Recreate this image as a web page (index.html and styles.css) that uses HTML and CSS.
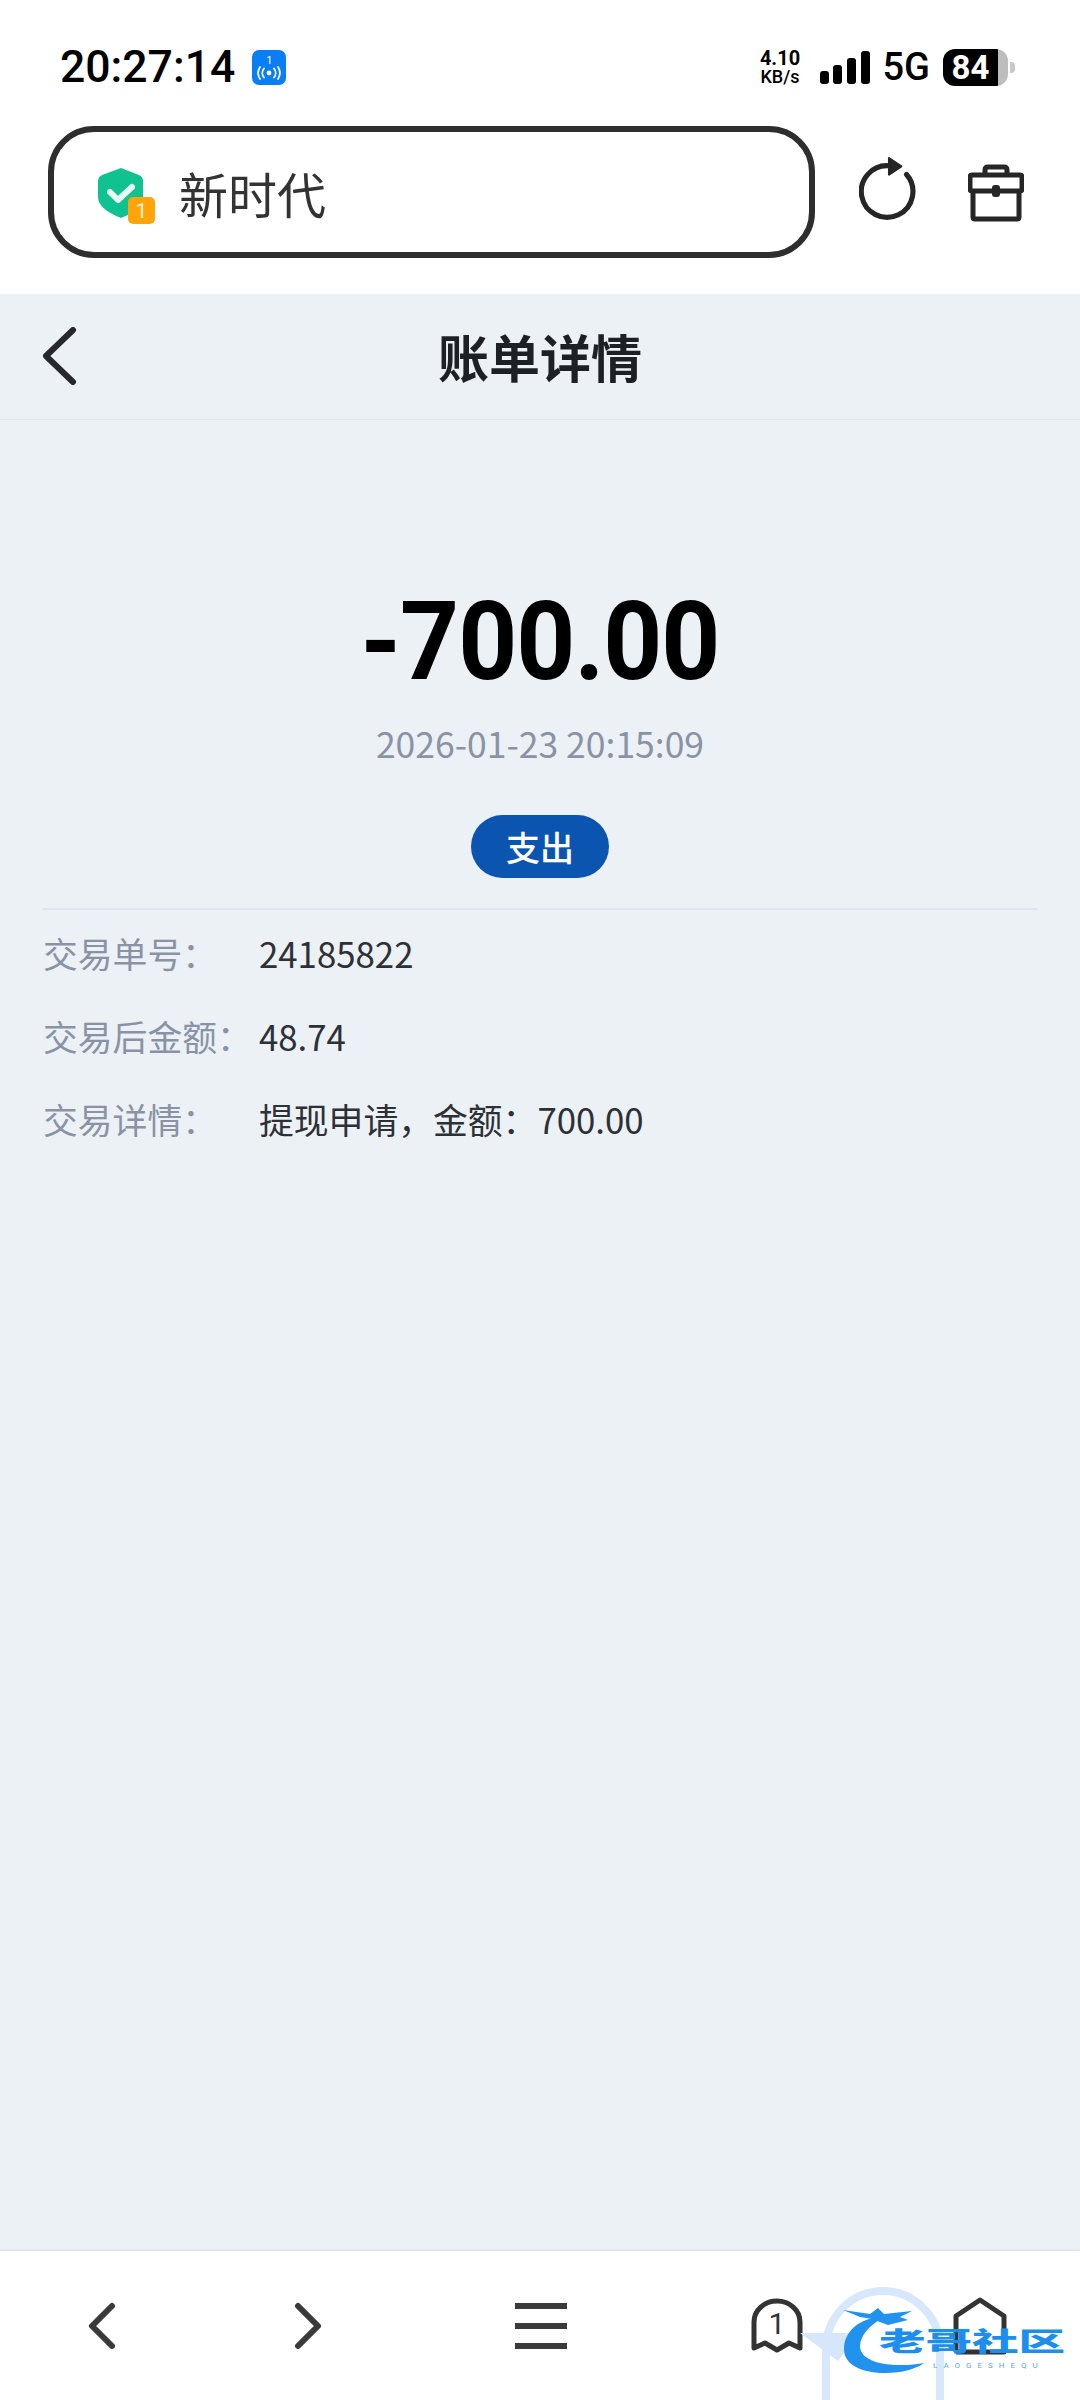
FILE: index.html
```html
<!DOCTYPE html>
<html lang="zh-CN">
<head>
    <meta charset="UTF-8">
    <meta name="viewport" content="width=device-width, initial-scale=1.0">
    <title>账单详情</title>
    <link rel="stylesheet" href="styles.css">
</head>
<body>
    <div class="status-bar">
        <div class="status-left">
            <span class="clock">20:27:14</span>
            <span class="hotspot">
                <span class="hotspot-num">1</span>
                <svg width="26" height="14" viewBox="0 0 26 14" fill="none" stroke="#fff" stroke-width="1.8" stroke-linecap="round">
                    <circle cx="13" cy="7" r="2.4" fill="#fff" stroke="none"/>
                    <path d="M8 2.5a7 7 0 0 0 0 9M18 2.5a7 7 0 0 1 0 9M4 1a11 11 0 0 0 0 12M22 1a11 11 0 0 1 0 12"/>
                </svg>
            </span>
        </div>
        <div class="status-right">
            <div class="speed"><span class="speed-value">4.10</span><span class="speed-unit">KB/s</span></div>
            <svg class="signal" width="50" height="33" viewBox="0 0 50 33" fill="#000">
                <rect x="0" y="20" width="9" height="13" rx="3"/>
                <rect x="13" y="14" width="9" height="19" rx="3"/>
                <rect x="27" y="7" width="9" height="26" rx="3"/>
                <rect x="41" y="0" width="9" height="33" rx="3"/>
            </svg>
            <span class="network">5G</span>
            <div class="battery"><span class="battery-level">84</span></div>
        </div>
    </div>

    <div class="toolbar">
        <div class="address">
            <span class="shield">
                <svg width="58" height="58" viewBox="0 0 58 58">
                    <path d="M23 1 L41 8 Q45 10 45 14 L45 30 Q45 42 23 51 Q0 42 0 30 L0 14 Q0 10 4 8 Z" fill="#0fc290"/>
                    <path d="M12 25 L20 33 L34 20" fill="none" stroke="#e9fbf5" stroke-width="6" stroke-linecap="round" stroke-linejoin="round"/>
                    <rect x="30" y="30" width="27" height="27" rx="5" fill="#ffa50a"/>
                    <text x="43.5" y="51" class="shield-num" text-anchor="middle">1</text>
                </svg>
            </span>
            <span class="address-text">新时代</span>
        </div>
        <svg class="tool-icon reload" width="60" height="64" viewBox="0 0 58 62" fill="none" stroke="#262626" stroke-width="5" stroke-linecap="round">
            <path d="M46 17 A25 25 0 1 1 29 8.500"/>
            <path d="M29 1 L41 9 L29 17 Z" fill="#262626" stroke-width="2" stroke-linejoin="round"/>
        </svg>
        <svg class="tool-icon box" width="56" height="58" viewBox="0 0 56 58" fill="none" stroke="#262626" stroke-width="5" stroke-linejoin="round">
            <path d="M5 28 V53 Q5 55 7 55 H49 Q51 55 51 53 V28"/>
            <path d="M2 13 Q2 11 4 11 H52 Q54 11 54 13 V25 Q54 27 52 27 H4 Q2 27 2 25 Z"/>
            <path d="M17 11 V6 Q17 3 20 3 H36 Q39 3 39 6 V11"/>
            <rect x="24" y="21" width="8" height="12" rx="3" fill="#262626" stroke="none"/>
        </svg>
    </div>

    <div class="page">
        <div class="page-header">
            <svg class="back" width="36" height="58" viewBox="0 0 36 58" fill="none" stroke="#26282c" stroke-width="6" stroke-linecap="round" stroke-linejoin="round">
                <path d="M32 3 L5 29 L32 55"/>
            </svg>
            <h1>账单详情</h1>
        </div>

        <div class="summary">
            <div class="amount">-700.00</div>
            <div class="time">2026-01-23 20:15:09</div>
            <div class="tag">支出</div>
        </div>

        <div class="details">
            <div class="row"><span class="label">交易单号：</span><span class="value">24185822</span></div>
            <div class="row"><span class="label">交易后金额：</span><span class="value">48.74</span></div>
            <div class="row"><span class="label">交易详情：</span><span class="value">提现申请，金额：700.00</span></div>
        </div>
    </div>

    <div class="bottom-bar">
        <div class="nav-item">
            <svg width="28" height="48" viewBox="0 0 28 48" fill="none" stroke="#3a3a3a" stroke-width="6" stroke-linecap="round" stroke-linejoin="round">
                <path d="M24 4 L4 24 L24 44"/>
            </svg>
        </div>
        <div class="nav-item">
            <svg width="28" height="48" viewBox="0 0 28 48" fill="none" stroke="#3a3a3a" stroke-width="6" stroke-linecap="round" stroke-linejoin="round">
                <path d="M4 4 L24 24 L4 44"/>
            </svg>
        </div>
        <div class="nav-item">
            <svg width="52" height="46" viewBox="0 0 52 46" fill="#3a3a3a">
                <rect x="0" y="0" width="52" height="6"/>
                <rect x="0" y="20" width="52" height="6"/>
                <rect x="0" y="40" width="52" height="6"/>
            </svg>
        </div>
        <div class="nav-item tabs">
            <svg width="52" height="56" viewBox="0 0 52 56" fill="none" stroke="#333" stroke-width="5" stroke-linejoin="round" stroke-linecap="round">
                <path d="M3 50 V24 A23 21 0 0 1 49 24 V50 L38 45 L26 52 L14 45 Z"/>
                <text x="26" y="36" class="tab-num" text-anchor="middle">1</text>
            </svg>
        </div>
        <div class="nav-item">
            <svg width="54" height="58" viewBox="0 0 54 58" fill="none" stroke="#333" stroke-width="5" stroke-linejoin="round">
                <path d="M3 55 V19 L27 3 L51 19 V55 H3"/>
            </svg>
        </div>
    </div>

    <div class="watermark">
        <svg class="watermark-art" width="170" height="113" viewBox="0 0 170 113" fill="none">
            <path d="M26 113 V62 A57 58 0 0 1 140 62 V113" stroke="#d8e8fc" stroke-width="8"/>
            <path d="M0 46 L60 46 L38 74 Z" fill="#d6e7fb"/>
            <path d="M84 30 C58 30 44 46 44 62 C44 78 62 86 86 86 C102 86 116 82 124 76 C104 80 62 80 60 60 C60 48 70 38 84 30 Z" fill="#2193ee"/>
            <path d="M43 23 L70 27 L78 21 L84 27 L112 24 L100 30 L108 33 L88 38 L72 32 L60 30 Z" fill="#2193ee"/>
        </svg>
        <span class="watermark-name">老哥社区</span>
        <span class="watermark-sub">LAOGESHEQU</span>
    </div>
</body>
</html>
```

FILE: styles.css
```css
* {
    box-sizing: border-box;
}
body {
    margin: 0;
    width: 1080px;
    height: 2400px;
    position: relative;
    display: flex;
    flex-direction: column;
    overflow: hidden;
    background-color: #fff;
    font-family: "Noto Sans CJK SC", "Noto Sans", sans-serif;
}

/* status bar */
.status-bar {
    height: 126px;
    padding: 8px 72px 0 60px;
    display: flex;
    align-items: center;
    justify-content: space-between;
}
.status-left {
    display: flex;
    align-items: center;
    gap: 17px;
}
.clock {
    font-family: Roboto, sans-serif;
    font-size: 44.500px;
    font-weight: 500;
    line-height: 1;
    color: #000;
}
.hotspot {
    width: 34px;
    height: 35px;
    border-radius: 7px;
    background-color: #0a7ef5;
    display: flex;
    flex-direction: column;
    align-items: center;
    justify-content: center;
}
.hotspot-num {
    font-family: Roboto, sans-serif;
    font-size: 11px;
    line-height: 11px;
    color: #fff;
}
.status-right {
    display: flex;
    align-items: center;
}
.speed {
    width: 41px;
    margin-right: 2px;
    display: flex;
    flex-direction: column;
    align-items: center;
    font-family: Roboto, sans-serif;
    color: #000;
}
.speed-value {
    font-size: 20px;
    font-weight: 700;
    line-height: 20px;
}
.speed-unit {
    font-size: 18px;
    font-weight: 500;
    line-height: 18px;
}
.signal {
    margin-left: 17px;
}
.network {
    margin-left: 13px;
    font-family: Roboto, sans-serif;
    font-size: 38px;
    font-weight: 500;
    line-height: 1;
    color: #000;
}
.battery {
    position: relative;
    width: 65px;
    height: 37px;
    margin-left: 13px;
    border-radius: 12px;
    background: linear-gradient(to right, #000 85%, #bdbdbd 85%);
}
.battery::after {
    content: "";
    position: absolute;
    left: 67px;
    top: 13px;
    width: 5px;
    height: 11px;
    border-radius: 0 4px 4px 0;
    background-color: #c9c9c9;
}
.battery-level {
    display: block;
    width: 55px;
    text-align: center;
    font-family: Roboto, sans-serif;
    font-size: 33px;
    font-weight: 700;
    line-height: 37px;
    color: #fff;
}

/* browser toolbar */
.toolbar {
    height: 168px;
    padding-left: 48px;
    display: flex;
    align-items: flex-start;
}
.address {
    width: 767px;
    height: 132px;
    padding-left: 44px;
    border: 6px solid #2e2e2e;
    border-radius: 46px;
    display: flex;
    align-items: center;
}
.shield {
    display: block;
    height: 58px;
    margin-top: 8px;
}
.shield-num {
    font-family: Roboto, sans-serif;
    font-size: 21px;
    fill: #fff3d8;
}
.address-text {
    margin-left: 23px;
    font-size: 49px;
    line-height: 1;
    color: #333;
}
.tool-icon {
    margin-top: 31px;
    margin-left: 49px;
}
.tool-icon.reload {
    margin-left: 44px;
}
.tool-icon.box {
    margin-top: 38px;
}

/* page content */
.page {
    flex: 1;
    background-color: #ecf1f5;
}
.page-header {
    position: relative;
    height: 126px;
    border-bottom: 1px solid #e2e7ec;
    display: flex;
    align-items: center;
    justify-content: center;
}
.back {
    position: absolute;
    left: 41px;
    top: 33px;
}
.page-header h1 {
    margin: 0;
    font-size: 51px;
    font-weight: 700;
    line-height: 1;
    color: #1d2024;
}
.summary {
    display: flex;
    flex-direction: column;
    align-items: center;
    padding: 0 43px;
}
.amount {
    margin-top: 167px;
    font-family: Roboto, sans-serif;
    font-size: 103px;
    font-weight: 700;
    line-height: 110px;
    letter-spacing: -1px;
    color: #000;
    transform: scaleY(1.07);
}
.time {
    margin-top: 24px;
    font-size: 35.500px;
    line-height: 44px;
    color: #8a93a5;
}
.tag {
    margin-top: 50px;
    width: 138px;
    height: 63px;
    border-radius: 32px;
    background-color: #0b55b0;
    font-size: 34px;
    font-weight: 500;
    line-height: 63px;
    text-align: center;
    color: #fff;
}
.details {
    margin: 30px 43px 0;
    padding-top: 1px;
    border-top: 2px solid #dfe5ee;
}
.row {
    height: 83px;
    display: flex;
    align-items: center;
    font-size: 34.800px;
}
.label {
    width: 216px;
    color: #8a93a5;
}
.value {
    color: #2d3035;
}

/* bottom navigation */
.bottom-bar {
    height: 151px;
    border-top: 2px solid #e3e7ee;
    display: grid;
    grid-template-columns: 204px 207px 260px 212px 193px;
    background-color: #fff;
}
.nav-item {
    display: flex;
    align-items: center;
    justify-content: center;
}
.tab-num {
    font-family: Roboto, sans-serif;
    font-size: 30px;
    fill: #333;
    stroke: none;
}

/* watermark sits over the bottom bar */
.watermark {
    position: absolute;
    left: 800px;
    top: 2287px;
    width: 280px;
    height: 113px;
}
.watermark-art {
    position: absolute;
    left: 0;
    top: 0;
}
.watermark-name {
    position: absolute;
    left: 79px;
    top: 40px;
    font-size: 26px;
    font-weight: 900;
    line-height: 26px;
    white-space: nowrap;
    color: #1c8fee;
    transform: scaleX(1.79);
    transform-origin: left center;
}
.watermark-sub {
    position: absolute;
    left: 133px;
    top: 73px;
    font-family: Roboto, sans-serif;
    font-size: 8px;
    line-height: 11px;
    letter-spacing: 6px;
    color: #5aa9ee;
}
```
